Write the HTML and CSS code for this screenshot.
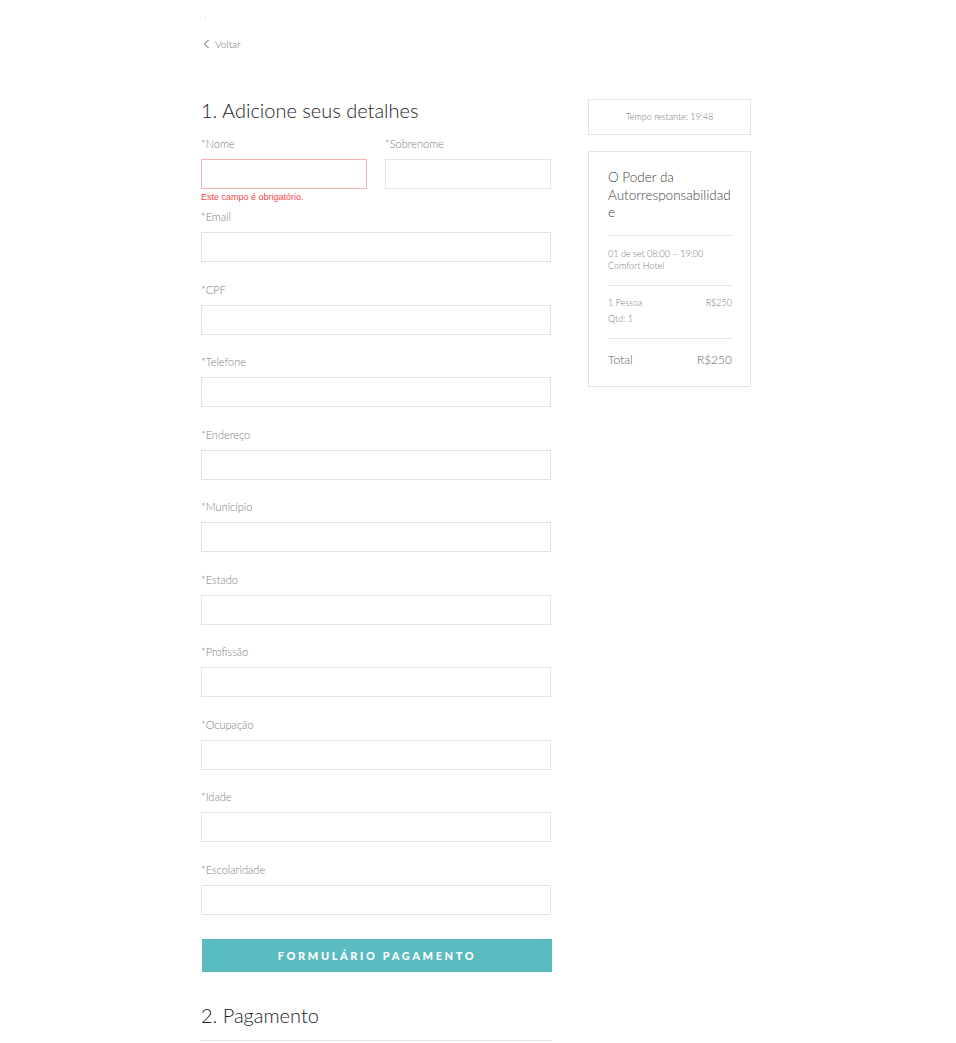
FILE: index.html
```html
<!DOCTYPE html>
<html lang="pt">
<head>
  <meta charset="UTF-8">
  <meta name="viewport" content="width=device-width, initial-scale=1.0">
  <title>Checkout | O Poder da Autorresponsabilidade</title>
  <link rel="stylesheet" href="styles.css">
</head>
<body>
  <div class="page">
    <div class="top">
      <span class="dot"></span>
      <a href="#" class="back">
        <svg width="7" height="10" viewBox="0 0 7 10"><path d="M5.5 1 L1.5 5 L5.5 9" fill="none" stroke="#555" stroke-width="1"/></svg>
        Voltar
      </a>
    </div>

    <div class="checkout">
      <main class="details">
        <h2 class="step">1. Adicione seus detalhes</h2>

        <div class="row name-row">
          <div class="field">
            <label>*Nome</label>
            <input type="text" class="invalid">
            <div class="error">Este campo é obrigatório.</div>
          </div>
          <div class="field">
            <label>*Sobrenome</label>
            <input type="text">
          </div>
        </div>

        <div class="field"><label>*Email</label><input type="text"></div>
        <div class="field"><label>*CPF</label><input type="text"></div>
        <div class="field"><label>*Telefone</label><input type="text"></div>
        <div class="field"><label>*Endereço</label><input type="text"></div>
        <div class="field"><label>*Município</label><input type="text"></div>
        <div class="field"><label>*Estado</label><input type="text"></div>
        <div class="field"><label>*Profissão</label><input type="text"></div>
        <div class="field"><label>*Ocupação</label><input type="text"></div>
        <div class="field"><label>*Idade</label><input type="text"></div>
        <div class="field last"><label>*Escolaridade</label><input type="text"></div>

        <button class="submit">FORMULÁRIO PAGAMENTO</button>

        <h2 class="step pay">2. Pagamento</h2>
        <div class="pay-line"></div>
      </main>

      <aside class="sidebar">
        <div class="timer">Tempo restante: 19:48</div>
        <div class="summary">
          <h3>O Poder da Autorresponsabilidade</h3>
          <div class="sep"></div>
          <div class="info">
            01 de set 08:00 – 19:00<br>
            Comfort Hotel
          </div>
          <div class="sep"></div>
          <div class="ticket">
            <div class="line"><span>1 Pessoa</span><span>R$250</span></div>
            <div class="line"><span>Qtd: 1</span></div>
          </div>
          <div class="sep"></div>
          <div class="total"><span>Total</span><span>R$250</span></div>
        </div>
      </aside>
    </div>
  </div>
</body>
</html>
```

FILE: styles.css
```css
body {
  margin: 0;
  font-family: 'Lato', 'Open Sans', sans-serif;
  font-weight: 300;
  background: #fff;
  color: #333;
}
.page {
  width: 554px;
  margin: 0 auto;
}
.top {
  height: 98px;
  position: relative;
}
.dot {
  position: absolute;
  left: 4px;
  top: 17px;
  width: 1px;
  height: 1px;
  background: #e8b4b4;
}
.back {
  position: absolute;
  left: 2px;
  top: 37px;
  display: flex;
  align-items: center;
  gap: 5px;
  font-size: 10px;
  line-height: 14px;
  color: #666;
  text-decoration: none;
}
.checkout {
  display: grid;
  grid-template-columns: 350px 163px;
  column-gap: 37px;
  align-items: start;
}
.step {
  margin: 0 0 15px;
  font-size: 20px;
  line-height: 24px;
  font-weight: 300;
  color: #222;
}
.row {
  display: grid;
  grid-template-columns: 166px 166px;
  column-gap: 18px;
}
.field {
  margin-bottom: 20.5px;
}
.name-row .field {
  margin-bottom: 7px;
}
.field label {
  display: block;
  font-size: 11px;
  line-height: 14px;
  color: #7d7d7d;
  margin-bottom: 8px;
}
.field input {
  display: block;
  box-sizing: border-box;
  width: 100%;
  height: 30px;
  border: 1px solid #e3e3e3;
  background: #fff;
  outline: none;
  margin: 0;
}
.field input.invalid {
  border-color: #f6b3b3;
}
.error {
  margin-top: 3px;
  font-family: 'Liberation Sans', Arial, sans-serif;
  font-size: 9px;
  line-height: 11px;
  color: #f2494c;
}
.field.last {
  margin-bottom: 24px;
}
.submit {
  display: block;
  width: 350px;
  height: 33px;
  margin-left: 1px;
  border: none;
  background: #5abbc0;
  color: #fff;
  font-family: 'Lato', sans-serif;
  font-weight: 900;
  font-size: 11px;
  letter-spacing: 2.6px;
  cursor: pointer;
}
.step.pay {
  margin: 31px 0 13px;
}
.pay-line {
  height: 1px;
  background: #e6e6e6;
}
.timer {
  box-sizing: border-box;
  height: 36px;
  border: 1px solid #e3e3e3;
  font-size: 9px;
  line-height: 34px;
  text-align: center;
  color: #777;
  margin-top: 1px;
  margin-bottom: 16px;
}
.summary {
  border: 1px solid #e3e3e3;
  padding: 17px 17px 18px 19px;
}
.summary h3 {
  margin: 0;
  font-size: 13.5px;
  line-height: 17.5px;
  font-weight: 300;
  color: #444;
  overflow-wrap: anywhere;
}
.sep {
  height: 1px;
  background: #e6e6e6;
  margin: 13px 1px 13px 0;
}
.info {
  margin-top: -1px;
  font-size: 9px;
  line-height: 12px;
  color: #777;
}
.ticket {
  margin: -4px 1px -2px 0;
  font-size: 9px;
  line-height: 16px;
  color: #777;
}
.line {
  display: flex;
  justify-content: space-between;
}
.total {
  display: flex;
  justify-content: space-between;
  font-size: 12px;
  line-height: 16px;
  color: #666;
  margin-top: 13px;
  margin-right: 1px;
}
```
